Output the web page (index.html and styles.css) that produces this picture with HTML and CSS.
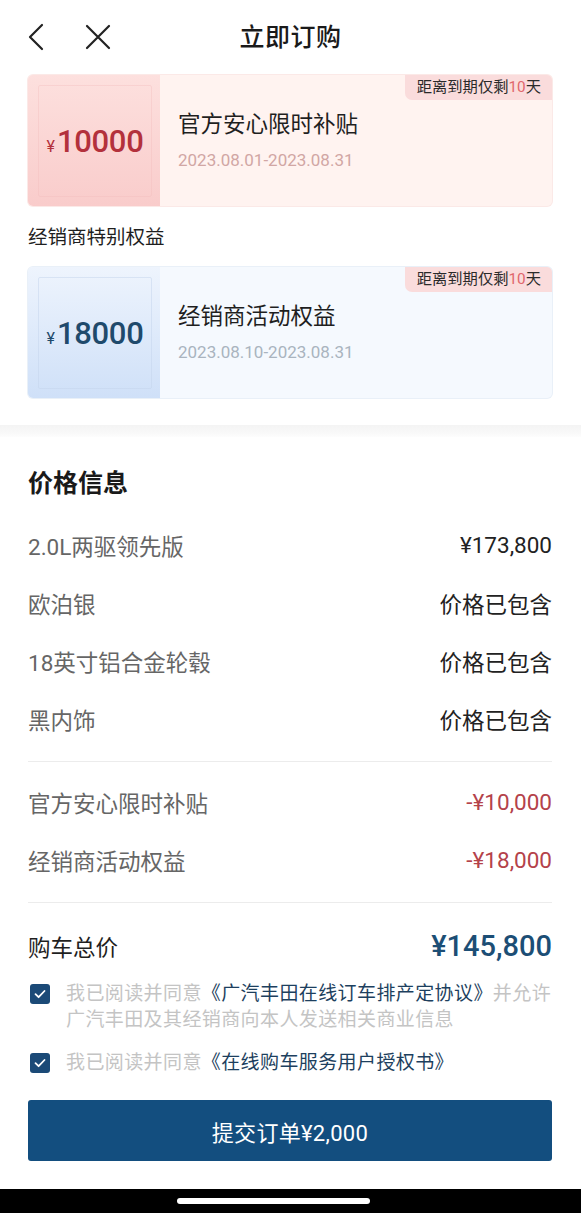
FILE: index.html
```html
<!DOCTYPE html>
<html lang="zh-CN">
<head>
<meta charset="utf-8">
<title>立即订购</title>
<link rel="stylesheet" href="styles.css">
</head>
<body>
<header class="nav">
  <div class="nav-icons">
    <svg class="ico" width="24" height="30" viewBox="0 0 24 30"><path d="M17 3 L5 15 L17 27" fill="none" stroke="#222" stroke-width="2.2" stroke-linecap="round" stroke-linejoin="round"/></svg>
    <svg class="ico close" width="28" height="28" viewBox="0 0 28 28"><path d="M3 3 L25 25 M25 3 L3 25" fill="none" stroke="#222" stroke-width="2.2" stroke-linecap="round"/></svg>
  </div>
  <h1 class="nav-title">立即订购</h1>
</header>

<section class="coupons">
  <div class="card card-red">
    <div class="card-left"><div class="card-frame"><span class="yen">¥</span><span class="amt">10000</span></div></div>
    <div class="card-body">
      <div class="card-title">官方安心限时补贴</div>
      <div class="card-date">2023.08.01-2023.08.31</div>
    </div>
    <div class="tag">距离到期仅剩<em>10</em>天</div>
  </div>

  <div class="sub-label">经销商特别权益</div>

  <div class="card card-blue">
    <div class="card-left"><div class="card-frame"><span class="yen">¥</span><span class="amt">18000</span></div></div>
    <div class="card-body">
      <div class="card-title">经销商活动权益</div>
      <div class="card-date">2023.08.10-2023.08.31</div>
    </div>
    <div class="tag">距离到期仅剩<em>10</em>天</div>
  </div>
</section>

<div class="band"></div>

<section class="price">
  <h2 class="price-title">价格信息</h2>
  <div class="row"><span class="lbl">2.0L两驱领先版</span><span class="val">¥173,800</span></div>
  <div class="row"><span class="lbl">欧泊银</span><span class="val">价格已包含</span></div>
  <div class="row"><span class="lbl">18英寸铝合金轮毂</span><span class="val">价格已包含</span></div>
  <div class="row"><span class="lbl">黑内饰</span><span class="val">价格已包含</span></div>
  <div class="divider"></div>
  <div class="row"><span class="lbl">官方安心限时补贴</span><span class="val neg">-¥10,000</span></div>
  <div class="row"><span class="lbl">经销商活动权益</span><span class="val neg">-¥18,000</span></div>
  <div class="divider d2"></div>
  <div class="row total"><span class="lbl">购车总价</span><span class="val sum">¥145,800</span></div>

  <div class="agree">
    <span class="cb"><svg width="20" height="20" viewBox="0 0 20 20"><path d="M5.5 10.2 L8.6 13.2 L14.5 7" fill="none" stroke="#fff" stroke-width="1.8" stroke-linecap="round" stroke-linejoin="round"/></svg></span>
    <p class="agree-text">我已阅读并同意<span class="link">《广汽丰田在线订车排产定协议》</span>并允许广汽丰田及其经销商向本人发送相关商业信息</p>
  </div>
  <div class="agree a2">
    <span class="cb"><svg width="20" height="20" viewBox="0 0 20 20"><path d="M5.5 10.2 L8.6 13.2 L14.5 7" fill="none" stroke="#fff" stroke-width="1.8" stroke-linecap="round" stroke-linejoin="round"/></svg></span>
    <p class="agree-text">我已阅读并同意<span class="link">《在线购车服务用户授权书》</span></p>
  </div>

  <button class="submit">提交订单¥2,000</button>
</section>

<footer class="home-bar"><span class="indicator"></span></footer>
</body>
</html>
```

FILE: styles.css
```css
* { box-sizing: border-box; }
html, body { margin: 0; padding: 0; }
body {
  width: 581px;
  height: 1213px;
  overflow: hidden;
  background: #fff;
  font-family: Roboto, "Noto Sans CJK SC", sans-serif;
  color: #222;
  display: flex;
  flex-direction: column;
}

.nav {
  height: 75px;
  position: relative;
  display: flex;
  align-items: center;
  justify-content: center;
}
.nav-icons {
  position: absolute;
  left: 25px;
  top: 22px;
  display: flex;
  align-items: center;
  gap: 35px;
}
.nav-title {
  margin: 0;
  font-size: 25px;
  font-weight: 500;
  line-height: 34px;
  color: #1a1a1a;
  letter-spacing: 0.5px;
}

.coupons { padding: 0 29px 27px 28px; }
.card {
  position: relative;
  display: flex;
  height: 131px;
  border-radius: 5px;
  overflow: hidden;
}
.card-red { background: #fff3f0; box-shadow: 0 0 0 1px #fbe9e7; }
.card-blue { background: #f5f9fe; box-shadow: 0 0 0 1px #e9f0f8; }
.card-left {
  width: 132px;
  flex: none;
  padding: 10px 8px 9px 10px;
}
.card-red .card-left { background: linear-gradient(180deg, #fde0de 0%, #f9cccb 100%); }
.card-blue .card-left { background: linear-gradient(180deg, #eef4fd 0%, #cfe0f8 100%); }
.card-frame {
  height: 100%;
  border: 1px solid rgba(255,255,255,0.55);
  border-radius: 2px;
  display: flex;
  align-items: center;
  justify-content: center;
  padding-top: 2px;
}
.card-red .card-frame { border-color: rgba(240,185,185,0.35); }
.card-blue .card-frame { border-color: rgba(195,212,235,0.5); }
.yen { font-size: 16px; margin-top: 9px; margin-right: 2px; }
.amt { font-size: 31px; line-height: 40px; font-weight: 500; letter-spacing: -0.3px; }
.card-red .yen, .card-red .amt { color: #b3313c; }
.card-blue .yen, .card-blue .amt { color: #1f4a6c; }

.card-body { padding: 34px 0 0 18px; }
.card-title { font-size: 22.5px; line-height: 30px; color: #1f1f1f; }
.card-date { font-size: 17px; line-height: 24px; margin-top: 9px; }
.card-red .card-date { color: #d1a6a4; }
.card-blue .card-date { color: #a9b4bf; }

.tag {
  position: absolute;
  top: 0;
  right: 0;
  height: 25px;
  padding: 0 11px 0 12px;
  background: #fadcdc;
  border-bottom-left-radius: 7px;
  font-size: 15.3px;
  line-height: 25px;
  color: #2a2a2a;
}
.tag em { font-style: normal; color: #e0666c; }

.sub-label {
  font-size: 19.5px;
  line-height: 26px;
  margin: 19px 0 16px;
  color: #1f1f1f;
}

.band {
  height: 12px;
  background: linear-gradient(180deg, #f4f4f4 0%, #f8f8f8 60%, #fdfdfd 100%);
  flex: none;
}

.price { padding: 30px 29px 0 28px; }
.price-title {
  margin: 0 0 15px;
  font-size: 25px;
  line-height: 34px;
  font-weight: 700;
  color: #1a1a1a;
}
.row {
  height: 58px;
  display: flex;
  justify-content: space-between;
  align-items: center;
  font-size: 22.5px;
}
.lbl { color: #666; }
.val { color: #222; }
.val.neg { color: #b4424a; }
.total .lbl { color: #1f1f1f; }
.val.sum { font-size: 29px; color: #1c4e75; font-weight: 500; }
.divider { height: 1px; background: #ececec; margin: 13px 0 11px; }
.divider.d2 { margin: 13px 0 14px; }

.agree {
  display: flex;
  align-items: flex-start;
  margin-top: 6px;
  padding-left: 2px;
}
.agree.a2 { margin-top: 17px; }
.cb {
  width: 20px;
  height: 20px;
  flex: none;
  margin-top: 3px;
  margin-right: 16px;
  background: #1b4a77;
  border-radius: 3px;
  display: flex;
}
.agree-text {
  margin: 0;
  font-size: 19px;
  letter-spacing: 0.4px;
  line-height: 26px;
  color: #c4c4c4;
}
.link { color: #1d3f5e; }

.submit {
  display: block;
  width: 100%;
  height: 61px;
  margin-top: 24px;
  border: none;
  border-radius: 3px;
  background: #134e7f;
  color: #fff;
  font-family: inherit;
  font-size: 22px;
  letter-spacing: 0.3px;
}

.home-bar {
  margin-top: auto;
  height: 24px;
  background: #000;
  flex: none;
  display: flex;
  justify-content: center;
  padding-top: 9px;
}
.indicator {
  width: 193px;
  height: 6px;
  border-radius: 3px;
  background: #fff;
  margin-left: -34px;
}
```
